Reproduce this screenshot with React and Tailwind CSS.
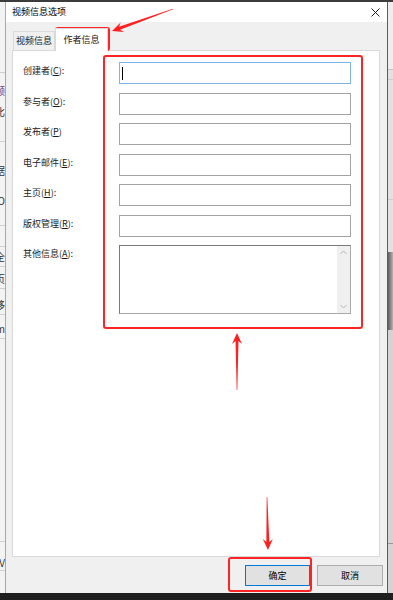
import React from "react";

function arrowPoints(tx, ty, px, py, headL = 11, headW = 10, tailW = 0.6, neckW = 3) {
  const dx = px - tx;
  const dy = py - ty;
  const len = Math.hypot(dx, dy);
  const ux = dx / len;
  const uy = dy / len;
  const nx = -uy;
  const ny = ux;
  const bx = px - ux * headL;
  const by = py - uy * headL;
  const cx = px - ux * (headL - 3);
  const cy = py - uy * (headL - 3);
  const pts = [
    [tx + (nx * tailW) / 2, ty + (ny * tailW) / 2],
    [cx + (nx * neckW) / 2, cy + (ny * neckW) / 2],
    [bx + (nx * headW) / 2, by + (ny * headW) / 2],
    [px, py],
    [bx - (nx * headW) / 2, by - (ny * headW) / 2],
    [cx - (nx * neckW) / 2, cy - (ny * neckW) / 2],
    [tx - (nx * tailW) / 2, ty - (ny * tailW) / 2],
  ];
  return pts.map((p) => p[0].toFixed(2) + "," + p[1].toFixed(2)).join(" ");
}

const leftSegs = [
  { h: 71, t: "", b: true },
  { h: 8, t: "" },
  { h: 20, t: "频", c: "text-[#6a3a7a]" },
  { h: 1, t: "" },
  { h: 20, t: "比" },
  { h: 20, t: "", b: true },
  { h: 19, t: "" },
  { h: 20, t: "据" },
  { h: 10, t: "" },
  { h: 20, t: "O" },
  { h: 15, t: "", b: true },
  { h: 21, t: "", b: true },
  { h: 20, t: "全", b: true },
  { h: 2, t: "" },
  { h: 20, t: "页", b: true },
  { h: 6, t: "" },
  { h: 20, t: "移", b: true },
  { h: 4, t: "" },
  { h: 20, t: "m", b: true },
  { h: 203, t: "", b: true },
  { h: 13, t: "" },
  { h: 16, t: "(V", b: true },
];

const fields = [
  ["创建者", "C", ":"],
  ["参与者", "O", ":"],
  ["发布者", "P", ""],
  ["电子邮件", "E", ":"],
  ["主页", "H", ":"],
  ["版权管理", "R", ":"],
];

function Label({ name, k, colon }) {
  return (
    <div className="w-[96px] shrink-0 pt-[3px] text-[9px] leading-[12px] text-[#1a1a1a] whitespace-nowrap">
      {name}(<u>{k}</u>){colon}
    </div>
  );
}

export default function App() {
  return (
    <div className="relative w-[393px] h-[600px] overflow-hidden flex flex-col bg-[#f0f0f0] font-['Noto_Sans_CJK_SC',sans-serif]">
      <div className="h-[2px] bg-[#3c3c3c] shrink-0" />
      <div className="flex flex-1 min-h-0">
        {/* left background strip */}
        <div className="w-[5px] shrink-0 flex flex-col bg-[#f3f3f3] overflow-hidden">
          {leftSegs.map((s, i) => (
            <div
              key={i}
              style={{ height: s.h }}
              className={
                "shrink-0 flex items-center justify-end overflow-hidden text-[10px] leading-[12px] whitespace-nowrap " +
                (s.c ? s.c : "text-[#333]") +
                (s.b ? " border-b border-[#cfcfcf]" : "")
              }
            >
              <span className="shrink-0">{s.t}</span>
            </div>
          ))}
        </div>

        {/* dialog */}
        <div className="w-[383px] shrink-0 flex flex-col border-l border-[#a8a8a8] border-r border-r-[#5c5c5c]">
          {/* title bar */}
          <div className="h-[20px] shrink-0 bg-white flex items-center justify-between pl-[6px] pr-[7px]">
            <span className="text-[9px] leading-[12px] text-black">视频信息选项</span>
            <svg width="9" height="9" viewBox="0 0 9 9">
              <path d="M0.5 0.5 L8.5 8.5 M8.5 0.5 L0.5 8.5" stroke="#1a1a1a" strokeWidth="1" />
            </svg>
          </div>

          {/* body */}
          <div className="flex-1 min-h-0 flex flex-col pt-[6px]">
            {/* tabs */}
            <div className="h-[22px] shrink-0 flex items-end pl-[7px]">
              <div className="w-[42px] h-[19px] bg-[#f0f0f0] border border-b-0 border-[#d9d9d9] flex items-center justify-center text-[9px] leading-[12px] text-[#1a1a1a]">
                视频信息
              </div>
              <div className="relative z-10 w-[53px] h-[23px] -mb-[1px] bg-white border border-b-0 border-[#d9d9d9] flex items-center justify-center text-[9px] leading-[12px] text-[#1a1a1a]">
                作者信息
              </div>
            </div>

            {/* panel */}
            <div className="flex-1 min-h-0 ml-[6px] mr-[7px] bg-white border border-[#d9d9d9] pt-[11px] pl-[10px] flex flex-col gap-y-[8.5px]">
              {fields.map((f, i) => (
                <div key={i} className="flex items-start">
                  <Label name={f[0]} k={f[1]} colon={f[2]} />
                  <div
                    className={
                      "w-[232px] h-[22px] bg-white border flex items-center " +
                      (i === 0 ? "border-[#7eb4ea]" : "border-[#a3a3a3]")
                    }
                  >
                    {i === 0 && <div className="ml-[2px] w-[1px] h-[13px] bg-black" />}
                  </div>
                </div>
              ))}
              <div className="flex items-start">
                <Label name="其他信息" k="A" colon=":" />
                <div className="w-[232px] h-[69px] bg-white border border-[#7a7a7a] border-r-[#a8a8a8] border-b-[#a8a8a8] flex justify-end">
                  <div className="w-[13px] bg-[#f0f0f0] flex flex-col items-center justify-between py-[4px]">
                    <svg width="7" height="5" viewBox="0 0 7 5">
                      <path d="M0.5 4 L3.5 1 L6.5 4" stroke="#b4b4b4" strokeWidth="1" fill="none" />
                    </svg>
                    <svg width="7" height="5" viewBox="0 0 7 5">
                      <path d="M0.5 1 L3.5 4 L6.5 1" stroke="#b4b4b4" strokeWidth="1" fill="none" />
                    </svg>
                  </div>
                </div>
              </div>
            </div>

            {/* footer */}
            <div className="h-[36px] shrink-0 flex justify-end items-start pt-[8px] pr-[4px] gap-[7px]">
              <div className="w-[65px] h-[21px] bg-[#e1e1e1] border border-[#0078d7] flex items-center justify-center text-[9px] leading-[12px] text-black">
                确定
              </div>
              <div className="w-[66px] h-[21px] bg-[#e1e1e1] border border-[#adadad] flex items-center justify-center text-[9px] leading-[12px] text-black">
                取消
              </div>
            </div>
          </div>
        </div>

        {/* right background strip */}
        <div className="w-[5px] shrink-0 flex flex-col">
          <div className="h-[68px] bg-[#eeeeee] border-b border-[#c4c4c4]" />
          <div className="h-[182px] bg-[#e2e2e2] flex flex-col">
            <div className="h-[10px] border-b border-[#cdcdcd]" />
            <div className="h-[120px] border-b border-[#cdcdcd]" />
          </div>
          <div className="h-[78px] bg-gradient-to-r from-[#5e5e5e] to-[#b4b4b4]" />
          <div className="flex-1 bg-[#d4d4d4] flex flex-col justify-end">
            <div className="h-[50px] border-t border-[#9a9a9a]" />
          </div>
        </div>
      </div>
      <div className="h-[7px] bg-[#1e1e1e] shrink-0" />

      {/* annotation overlay */}
      <svg className="absolute inset-0 pointer-events-none" width="393" height="600" viewBox="0 0 393 600">
        <rect x="56" y="28" width="53" height="22" rx="2" fill="none" stroke="#ff2424" strokeWidth="2" />
        <rect x="104" y="56" width="258" height="272" rx="2" fill="none" stroke="#ff2424" strokeWidth="2" />
        <rect x="229" y="558" width="82" height="33" rx="2" fill="none" stroke="#ff2424" strokeWidth="2" />
        <polygon points={arrowPoints(173, 9, 112, 31)} fill="#ff1f1f" />
        <polygon points={arrowPoints(237, 390, 237, 333)} fill="#ff1f1f" />
        <polygon points={arrowPoints(267, 497, 268, 550)} fill="#ff1f1f" />
      </svg>
    </div>
  );
}
